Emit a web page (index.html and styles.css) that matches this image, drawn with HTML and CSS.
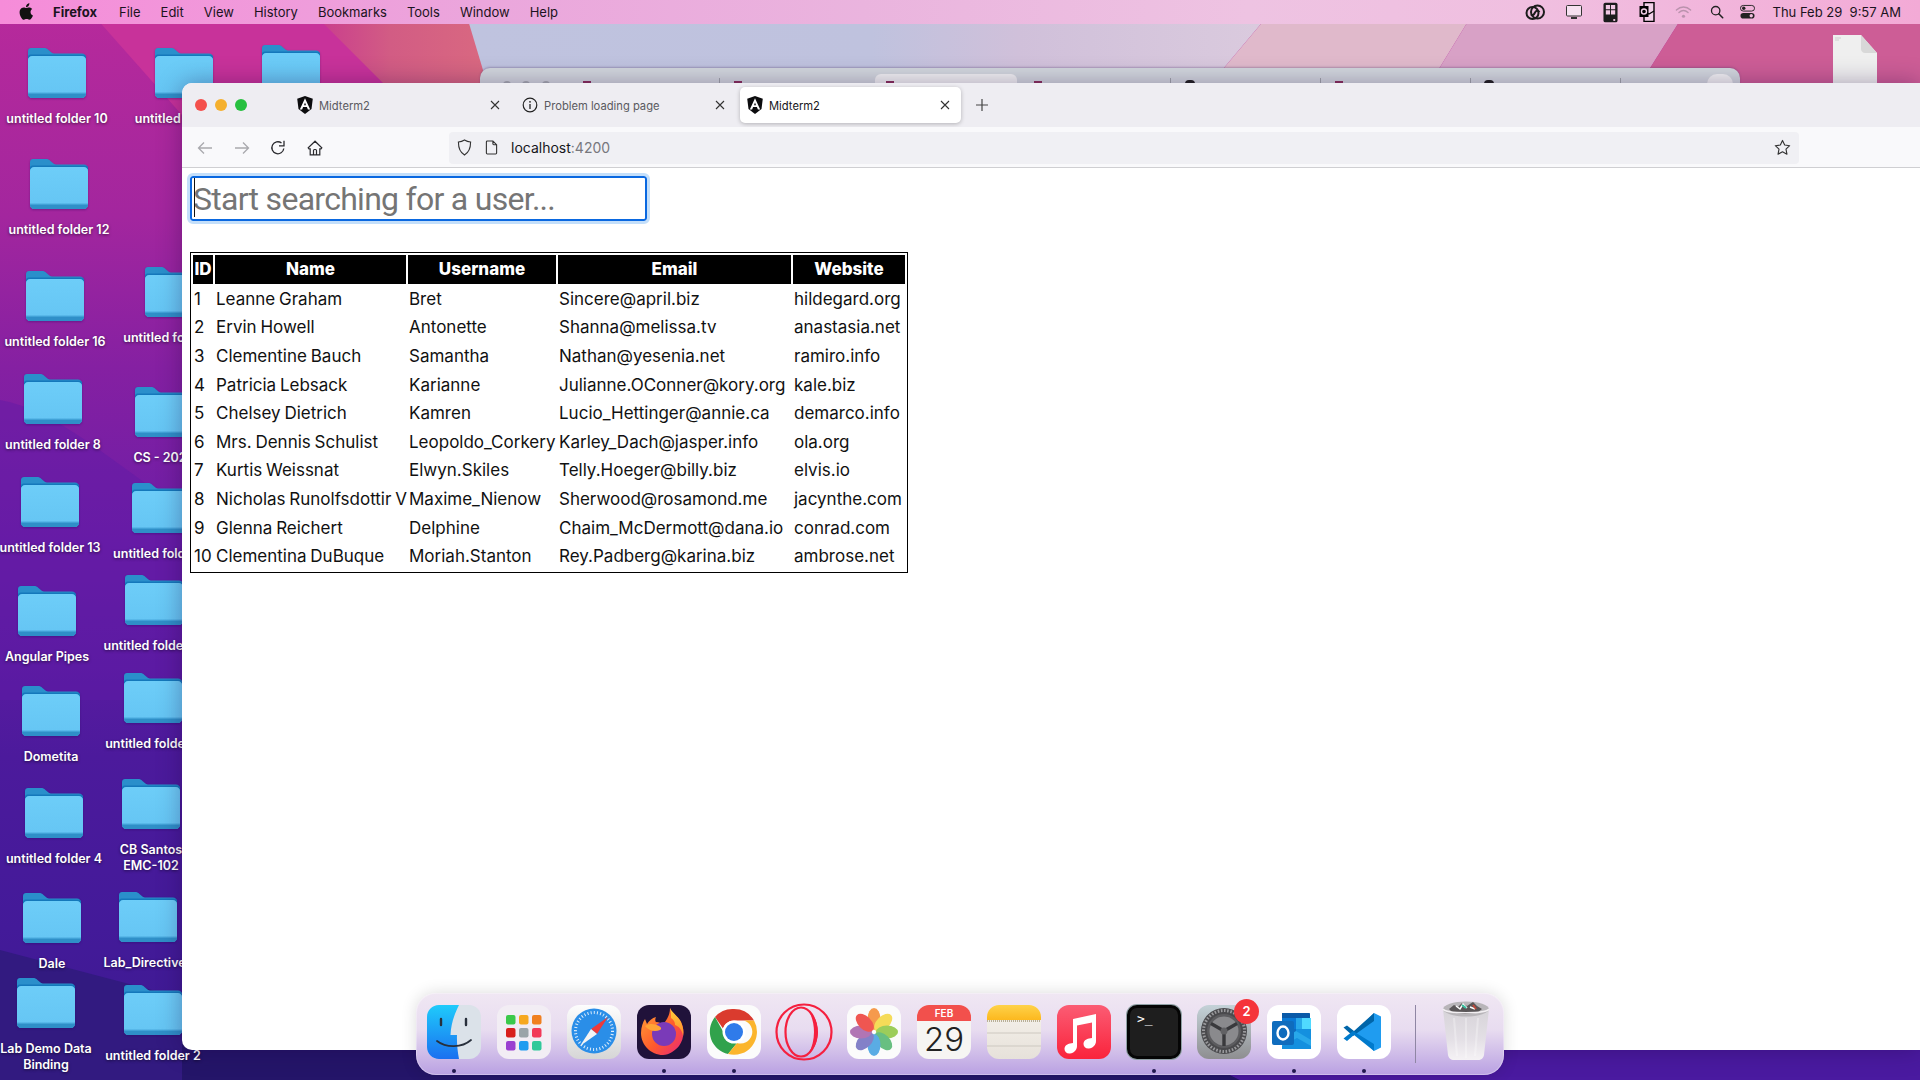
FILE: index.html
```html
<!DOCTYPE html>
<html lang="en">
<head>
<meta charset="utf-8">
<title>Midterm2</title>
<link rel="stylesheet" href="styles.css">
</head>
<body>
<svg class="defs" width="0" height="0" aria-hidden="true">
  <defs>
    <linearGradient id="fgBody" x1="0" y1="0" x2="0" y2="1"><stop offset="0" stop-color="#6dcdf8"/><stop offset=".86" stop-color="#66c6f4"/><stop offset=".87" stop-color="#56b6e8"/><stop offset="1" stop-color="#4aabe0"/></linearGradient>
    <symbol id="folder" viewBox="0 0 58 50">
      <path d="M3 0h13c2 0 3 .6 4.500 2l3 2.500c1 .8 2 1 3 1H54c2.200 0 4 1.800 4 4v6H0V3c0-1.700 1.300-3 3-3z" fill="#2a8fcb"/>
      <path d="M0 9c0-1.500 1-2.500 2.500-2.500h53C57 6.500 58 7.500 58 9v1H0z" fill="#1478bb"/>
      <path d="M0 12c0-2.200 1.800-4 4-4h50c2.200 0 4 1.800 4 4v34c0 2.200-1.800 4-4 4H4c-2.200 0-4-1.800-4-4z" fill="url(#fgBody)"/>
      <path d="M0 46c0 2.200 1.800 4 4 4h50c2.200 0 4-1.800 4-4v-.5H0z" fill="#2f8fc8"/>
    </symbol>
    <symbol id="ng" viewBox="0 0 16 18">
      <path d="M8 0 .2 2.700l1.300 10.300L8 18l6.500-5 1.300-10.300z" fill="#0c0c0e"/>
      <path d="M8 2.200 2.800 13.600h2.300l1-2.500h3.800l1 2.500h2.300zM7 9.200l1-2.600 1 2.600z" fill="#fff"/>
    </symbol>
  </defs>
</svg>

<main class="desktop">
  <svg class="wallpaper" viewBox="0 0 1920 1080" preserveAspectRatio="none" aria-hidden="true">
    <defs>
      <linearGradient id="wpBase" x1="0" y1="0" x2="0" y2="1">
        <stop offset="0" stop-color="#b82a9b"/><stop offset=".2" stop-color="#a3269e"/><stop offset=".34" stop-color="#8520a2"/><stop offset=".5" stop-color="#6c1da6"/><stop offset=".7" stop-color="#4c1a9c"/><stop offset=".86" stop-color="#431a99"/><stop offset="1" stop-color="#3c1a90"/>
      </linearGradient>
      <linearGradient id="wpLav" x1="0" y1="0" x2="1" y2="0">
        <stop offset="0" stop-color="#bfc3df"/><stop offset=".5" stop-color="#bfc2de"/><stop offset=".68" stop-color="#d0c0da"/><stop offset="1" stop-color="#dbcbde"/>
      </linearGradient>
      <linearGradient id="wpRed" x1="0" y1="0" x2="1" y2="0">
        <stop offset="0" stop-color="#c73590"/><stop offset=".45" stop-color="#d25c84"/><stop offset="1" stop-color="#da6a80"/>
      </linearGradient>
    </defs>
    <rect width="1920" height="1080" fill="url(#wpBase)"/>
    <path d="M0 400C60 410 120 470 200 520V700H0z" fill="#5f1ba6" opacity=".45"/>
    <path d="M80 0H420L500 120H200L182 115z" fill="#c8329a"/>
    <path d="M300 0H480L500 100H400z" fill="url(#wpRed)"/>
    <path d="M462 0H1281L1197 100H492z" fill="url(#wpLav)"/>
    <path d="M1281 0H1481L1420 100H1197z" fill="#e0b9cb"/>
    <path d="M1481 0H1693L1630 100H1420z" fill="#d8a1c6"/>
    <path d="M1693 0H1920V100H1630z" fill="#cd5d96"/>
    <path d="M0 950L190 1000V1080H0z" fill="#321a80"/>
    <path d="M182 1040H1160L1240 1080H182z" fill="#241569"/>
    <path d="M1160 1040H1920V1080H1240z" fill="#4a1aa0"/>
  </svg>

  <div class="menubar">
    <div class="menu-left">
      <svg class="apple" viewBox="0 0 14 17" aria-hidden="true"><path d="M11.500 9c0-2 1.600-2.900 1.700-3-1-1.400-2.400-1.600-2.900-1.600-1.200-.1-2.400.7-3 .7s-1.600-.7-2.600-.7C3.300 4.400 2 5.200 1.300 6.400c-1.500 2.500-.4 6.300 1 8.300.7 1 1.500 2.100 2.600 2.100 1 0 1.400-.7 2.700-.7s1.600.7 2.700.7 1.800-1 2.500-2c.8-1.100 1.100-2.200 1.100-2.300-.1 0-2.400-.9-2.400-3.500zM9.500 3c.6-.7 1-1.700.9-2.700-.9 0-1.900.6-2.500 1.300-.5.6-1 1.600-.9 2.600 1 .1 1.900-.5 2.500-1.200z" fill="#111"/></svg>
      <strong class="menu-app">Firefox</strong>
      <span>File</span><span>Edit</span><span>View</span><span>History</span><span>Bookmarks</span><span>Tools</span><span>Window</span><span>Help</span>
    </div>
    <div class="menu-right">
      <svg class="mi mi-cc" viewBox="0 0 20 20" aria-hidden="true"><g fill="none" stroke="#1c1c1c" stroke-width="2"><circle cx="7.500" cy="11" r="6"/><circle cx="12.500" cy="10" r="6.500"/><path d="M6 12.500c2 1.500 3 0 4-2s3-2.500 4.500-.5"/></g></svg>
      <svg class="mi mi-disp" viewBox="0 0 18 18" aria-hidden="true"><rect x="1.500" y="2.500" width="15" height="10.500" rx="1" fill="#f6e0f0" stroke="#333" stroke-width="1"/><path d="M6 14h6v2H6z" fill="#333"/></svg>
      <svg class="mi mi-grid" viewBox="0 0 16 22" aria-hidden="true"><rect x=".5" y=".5" width="15" height="21" rx="2" fill="#1c1c1c"/><path d="M3 3h4.500v4.500H3zM8.500 3H13v4.500H8.500zM3 8.500h4.500V13H3zM8.500 8.500H13V13H8.500z" fill="#f2c8e4"/><rect x="11" y="18" width="2" height="2" fill="#f2c8e4"/></svg>
      <svg class="mi mi-ol" viewBox="0 0 16 20" aria-hidden="true"><path d="M5 .5h10v19H5z" fill="#f3d0e8" stroke="#000" stroke-width="1.400"/><path d="M5 9l5 3 5-3" fill="none" stroke="#000" stroke-width="1.200"/><rect x=".5" y="4" width="9" height="11" fill="#000"/><circle cx="5" cy="9.500" r="2.500" fill="none" stroke="#f3d0e8" stroke-width="1.400"/></svg>
      <svg class="mi mi-wifi" viewBox="0 0 18 14" aria-hidden="true"><g fill="none" stroke="#ba92ad" stroke-width="1.500" stroke-linecap="round"><path d="M1.500 4.800C6 .7 12 .7 16.500 4.800"/><path d="M4.200 7.600c3-2.600 6.600-2.600 9.600 0"/></g><circle cx="9" cy="11.500" r="1.700" fill="#ba92ad"/></svg>
      <svg class="mi mi-search" viewBox="0 0 16 16" aria-hidden="true"><circle cx="6.500" cy="6.500" r="4.800" fill="none" stroke="#222" stroke-width="1.500"/><path d="M10 10l4.500 4.500" stroke="#222" stroke-width="1.800" stroke-linecap="round"/></svg>
      <svg class="mi mi-ctl" viewBox="0 0 16 16" aria-hidden="true"><rect x=".5" y="1" width="15" height="6" rx="3" fill="none" stroke="#222"/><circle cx="4" cy="4" r="1.800" fill="#222"/><rect x=".5" y="9" width="15" height="6" rx="3" fill="#222"/><circle cx="12" cy="12" r="1.800" fill="#f3c0e0"/></svg>
      <span class="clock">Thu Feb 29&nbsp;&nbsp;9:57 AM</span>
    </div>
  </div>

  <div class="icon i1"><svg class="folder"><use href="#folder"/></svg><span>untitled folder 10</span></div>
  <div class="icon i2"><svg class="folder"><use href="#folder"/></svg><span>untitled folder 11</span></div>
  <div class="icon i3"><svg class="folder"><use href="#folder"/></svg></div>
  <div class="icon i4"><svg class="folder"><use href="#folder"/></svg><span>untitled folder 12</span></div>
  <div class="icon i5"><svg class="folder"><use href="#folder"/></svg><span>untitled folder 16</span></div>
  <div class="icon i6"><svg class="folder"><use href="#folder"/></svg><span>untitled folder 14</span></div>
  <div class="icon i7"><svg class="folder"><use href="#folder"/></svg><span>untitled folder 8</span></div>
  <div class="icon i8"><svg class="folder"><use href="#folder"/></svg><span>CS - 2023</span></div>
  <div class="icon i9"><svg class="folder"><use href="#folder"/></svg><span>untitled folder 13</span></div>
  <div class="icon i10"><svg class="folder"><use href="#folder"/></svg><span>untitled folder 9</span></div>
  <div class="icon i11"><svg class="folder"><use href="#folder"/></svg><span>Angular Pipes</span></div>
  <div class="icon i12"><svg class="folder"><use href="#folder"/></svg><span>untitled folder 15</span></div>
  <div class="icon i13"><svg class="folder"><use href="#folder"/></svg><span>Dometita</span></div>
  <div class="icon i14"><svg class="folder"><use href="#folder"/></svg><span>untitled folder 5</span></div>
  <div class="icon i15"><svg class="folder"><use href="#folder"/></svg><span>untitled folder 4</span></div>
  <div class="icon i16"><svg class="folder"><use href="#folder"/></svg><span>CB Santos<br>EMC-102</span></div>
  <div class="icon i17"><svg class="folder"><use href="#folder"/></svg><span>Dale</span></div>
  <div class="icon i18"><svg class="folder"><use href="#folder"/></svg><span>Lab_Directives</span></div>
  <div class="icon i19"><svg class="folder"><use href="#folder"/></svg><span>Lab Demo Data<br>Binding</span></div>
  <div class="icon i20"><svg class="folder"><use href="#folder"/></svg><span>untitled folder 2</span></div>

  <div class="doc-file">
    <svg viewBox="0 0 44 48" aria-hidden="true"><path d="M0 0h28l16 18v30H0z" fill="#efefef"/><path d="M28 0v14c0 2.200 1.800 4 4 4h12z" fill="#d8d8d8"/><path d="M2 3h6M2 5h4" stroke="#bbb" stroke-width=".6"/></svg>
  </div>

  <div class="back-window">
    <span class="back-tab"></span>
    <span class="back-end"></span>
    <i class="tl t1"></i><i class="tl t2"></i><i class="tl t3"></i>
    <i class="mark m1"></i><i class="mark m2"></i><i class="mark m3"></i><i class="mark m4"></i><i class="mark m5"></i><i class="mark dark m6"></i><i class="mark dark m7"></i>
    <i class="sep s1"></i><i class="sep s2"></i><i class="sep s3"></i><i class="sep s4"></i><i class="sep s5"></i>
  </div>

  <section class="browser">
    <div class="tabstrip">
      <div class="lights"><i class="light red"></i><i class="light amber"></i><i class="light green"></i></div>
      <div class="tab">
        <svg class="fav"><use href="#ng"/></svg><span class="tab-title">Midterm2</span>
        <svg class="tab-x" viewBox="0 0 12 12" aria-hidden="true"><path d="M2 2l8 8M10 2l-8 8" stroke="#333" stroke-width="1.100"/></svg>
      </div>
      <div class="tab">
        <svg class="fav" viewBox="0 0 16 18" aria-hidden="true"><circle cx="8" cy="9" r="6.800" fill="none" stroke="#222" stroke-width="1.200"/><path d="M8 8v5" stroke="#222" stroke-width="1.300"/><circle cx="8" cy="5.800" r=".9" fill="#222"/></svg><span class="tab-title">Problem loading page</span>
        <svg class="tab-x" viewBox="0 0 12 12" aria-hidden="true"><path d="M2 2l8 8M10 2l-8 8" stroke="#333" stroke-width="1.100"/></svg>
      </div>
      <div class="tab active">
        <svg class="fav"><use href="#ng"/></svg><span class="tab-title">Midterm2</span>
        <svg class="tab-x" viewBox="0 0 12 12" aria-hidden="true"><path d="M2 2l8 8M10 2l-8 8" stroke="#333" stroke-width="1.100"/></svg>
      </div>
      <svg class="new-tab" viewBox="0 0 14 14" aria-hidden="true"><path d="M7 1v12M1 7h12" stroke="#444" stroke-width="1.200"/></svg>
    </div>

    <div class="toolbar">
      <svg class="tb dim" viewBox="0 0 16 16" aria-hidden="true"><path d="M15 8H1.500M7 2.500 1.500 8 7 13.500" fill="none" stroke="#a9a9ad" stroke-width="1.300"/></svg>
      <svg class="tb dim" viewBox="0 0 16 16" aria-hidden="true"><path d="M1 8h13.500M9 2.500 14.500 8 9 13.500" fill="none" stroke="#a9a9ad" stroke-width="1.300"/></svg>
      <svg class="tb" viewBox="0 0 16 16" aria-hidden="true"><path d="M13.800 8.500A6 6 0 1 1 11.500 3" fill="none" stroke="#2b2b2f" stroke-width="1.300"/><path d="M14 .8v5h-5" fill="none" stroke="#2b2b2f" stroke-width="1.300"/></svg>
      <svg class="tb" viewBox="0 0 16 16" aria-hidden="true"><path d="M8 1.200 1.200 7.800 2 8.800h1.200v6h9.600v-6H14l.8-1zM6.500 14.800v-4.300c0-.6.400-1 1-1h1c.6 0 1 .4 1 1v4.300" fill="none" stroke="#2b2b2f" stroke-width="1.200"/></svg>
      <div class="urlbar">
        <svg class="shield" viewBox="0 0 16 18" aria-hidden="true"><path d="M8 1c2 1.300 4 2 6.500 2.200 0 6-1.200 10.800-6.500 13.800C2.700 14 1.500 9.200 1.500 3.200 4 3 6 2.300 8 1z" fill="none" stroke="#333" stroke-width="1.200"/></svg>
        <svg class="page" viewBox="0 0 14 16" aria-hidden="true"><path d="M2.500 1h6L12.500 5v9c0 .6-.4 1-1 1h-9c-.6 0-1-.4-1-1V2c0-.6.400-1 1-1zM8.500 1v3c0 .6.400 1 1 1h3" fill="none" stroke="#333" stroke-width="1.200"/></svg>
        <span class="url"><span class="host">localhost</span>:4200</span>
        <svg class="star" viewBox="0 0 18 18" aria-hidden="true"><path d="M9 1.500l2.300 4.900 5.300.7-3.900 3.700 1 5.300L9 13.500l-4.700 2.600 1-5.300L1.400 7.100l5.300-.7z" fill="none" stroke="#333" stroke-width="1.200" stroke-linejoin="round"/></svg>
      </div>
    </div>

    <div class="content">
      <div class="search-wrap">
        <i class="caret"></i>
        <input class="search" type="text" placeholder="Start searching for a user...">
      </div>
      <table class="users">
        <colgroup><col class="c-id"><col class="c-name"><col class="c-user"><col class="c-mail"><col class="c-web"></colgroup>
        <thead><tr><th>ID</th><th>Name</th><th>Username</th><th>Email</th><th>Website</th></tr></thead>
        <tbody>
          <tr><td>1</td><td>Leanne Graham</td><td>Bret</td><td>Sincere@april.biz</td><td>hildegard.org</td></tr>
          <tr><td>2</td><td>Ervin Howell</td><td>Antonette</td><td>Shanna@melissa.tv</td><td>anastasia.net</td></tr>
          <tr><td>3</td><td>Clementine Bauch</td><td>Samantha</td><td>Nathan@yesenia.net</td><td>ramiro.info</td></tr>
          <tr><td>4</td><td>Patricia Lebsack</td><td>Karianne</td><td>Julianne.OConner@kory.org</td><td>kale.biz</td></tr>
          <tr><td>5</td><td>Chelsey Dietrich</td><td>Kamren</td><td>Lucio_Hettinger@annie.ca</td><td>demarco.info</td></tr>
          <tr><td>6</td><td>Mrs. Dennis Schulist</td><td>Leopoldo_Corkery</td><td>Karley_Dach@jasper.info</td><td>ola.org</td></tr>
          <tr><td>7</td><td>Kurtis Weissnat</td><td>Elwyn.Skiles</td><td>Telly.Hoeger@billy.biz</td><td>elvis.io</td></tr>
          <tr><td>8</td><td>Nicholas Runolfsdottir V</td><td>Maxime_Nienow</td><td>Sherwood@rosamond.me</td><td>jacynthe.com</td></tr>
          <tr><td>9</td><td>Glenna Reichert</td><td>Delphine</td><td>Chaim_McDermott@dana.io</td><td>conrad.com</td></tr>
          <tr><td>10</td><td>Clementina DuBuque</td><td>Moriah.Stanton</td><td>Rey.Padberg@karina.biz</td><td>ambrose.net</td></tr>
        </tbody>
      </table>
    </div>
  </section>

  <nav class="dock">
    <div class="app">
      <svg viewBox="0 0 54 54" aria-hidden="true"><defs><linearGradient id="fL" x1="0" y1="0" x2="0" y2="1"><stop offset="0" stop-color="#1fcbfb"/><stop offset="1" stop-color="#1a70f0"/></linearGradient></defs><rect width="54" height="54" rx="12" fill="#dbe2e9"/><path d="M12 0h20c-4 8-8 18-8.500 30H30c-.3 8 .5 16 2 24H12C5.400 54 0 48.600 0 42V12C0 5.400 5.400 0 12 0z" fill="url(#fL)"/><path d="M14 14v6M39 14v6" stroke="#28303c" stroke-width="2.400" stroke-linecap="round"/><path d="M10 36c9 7 25 7 34-1" fill="none" stroke="#28303c" stroke-width="1.800" stroke-linecap="round"/></svg>
      <i class="dot"></i>
    </div>
    <div class="app">
      <svg viewBox="0 0 54 54" aria-hidden="true"><rect width="54" height="54" rx="12" fill="#f2edf4"/><rect x="9" y="10" width="9.500" height="9.500" rx="2" fill="#3bc94a"/><rect x="22" y="10" width="9.500" height="9.500" rx="2" fill="#f6a81f"/><rect x="35" y="10" width="9.500" height="9.500" rx="2" fill="#f0801f"/><rect x="9" y="23" width="9.500" height="9.500" rx="2" fill="#d81f1c"/><rect x="22" y="23" width="9.500" height="9.500" rx="2" fill="#9aa4a8"/><rect x="35" y="23" width="9.500" height="9.500" rx="2" fill="#f23a58"/><rect x="9" y="36" width="9.500" height="9.500" rx="2" fill="#9a3fd0"/><rect x="22" y="36" width="9.500" height="9.500" rx="2" fill="#1f9cf0"/><rect x="35" y="36" width="9.500" height="9.500" rx="2" fill="#2fc99a"/></svg>
    </div>
    <div class="app">
      <svg viewBox="0 0 54 54" aria-hidden="true"><defs><linearGradient id="sf" x1="0" y1="0" x2="0" y2="1"><stop offset="0" stop-color="#fdfdfd"/><stop offset="1" stop-color="#d6d6d6"/></linearGradient></defs><rect width="54" height="54" rx="12" fill="url(#sf)"/><circle cx="27" cy="26" r="22.500" fill="#2a8ee8"/><circle cx="27" cy="26" r="18.500" fill="none" stroke="#fff" stroke-width="3" stroke-dasharray="1 2.200" opacity=".85"/><path d="M41 12 24 24 30 29z" fill="#ee3a3a"/><path d="M13 41 24 24 30 29z" fill="#f4f4f4"/></svg>
    </div>
    <div class="app">
      <svg viewBox="0 0 54 54" aria-hidden="true"><defs><linearGradient id="ffo" x1="0" y1="0" x2="1" y2="1"><stop offset="0" stop-color="#ffa436"/><stop offset=".55" stop-color="#ff5a2c"/><stop offset="1" stop-color="#e8257f"/></linearGradient><linearGradient id="ffy" x1="0" y1="0" x2="0" y2="1"><stop offset="0" stop-color="#ffd23c"/><stop offset="1" stop-color="#ff8a2a"/></linearGradient></defs><rect width="54" height="54" rx="12" fill="#20123a"/><path d="M33 3c2 5 8 8 11 14 4 8 3 17-2 24-3 4-10 9-16 9C14 50 4 40 4 28c0-6 2-11 4-14l2 5c2-3 5-6 9-7-1 2-1 4 0 5 3 0 5 1 7 3 3-5 7-9 7-17z" fill="url(#ffo)"/><path d="M33 3c2 5 8 8 11 14 2 5 3 9 2 14-1-7-5-10-8-11 0-3-1-5-4-7 0-4 0-7-1-10z" fill="url(#ffy)"/><circle cx="27" cy="29" r="12" fill="#7a3ab8"/><path d="M8 21c5-3 10-2 14 0 2 1 3 3 1 4-5 2-11 1-15-4z" fill="#ffa436"/></svg>
      <i class="dot"></i>
    </div>
    <div class="app">
      <svg viewBox="0 0 54 54" aria-hidden="true"><rect width="54" height="54" rx="12" fill="#fbfbfb"/><path d="M27 4a23 23 0 0 1 20 11.500H27a11.500 11.500 0 0 0-11 8L8 12A23 23 0 0 1 27 4z" fill="#da3b2e"/><path d="M8 12l10 18a11.500 11.500 0 0 0 12 8L21 49A23 23 0 0 1 8 12z" fill="#31a24c"/><path d="M47 15.500A23 23 0 0 1 21 49l9-11a11.500 11.500 0 0 0 7-22.500z" fill="#fbb52c"/><circle cx="27" cy="27" r="11.500" fill="#fff"/><circle cx="27" cy="27" r="9" fill="#2f7bea"/></svg>
      <i class="dot"></i>
    </div>
    <div class="app">
      <svg class="opera" viewBox="0 0 58 58" aria-hidden="true"><circle cx="29" cy="29" r="27.500" fill="none" stroke="#f5203f" stroke-width="2.200"/><ellipse cx="26" cy="29" rx="15.500" ry="24.500" fill="none" stroke="#f5203f" stroke-width="2.200"/><path d="M34 8c6 5 9 13 9 21s-3 16-9 21c3-6 5-13 5-21s-2-15-5-21z" fill="#f5203f"/></svg>
    </div>
    <div class="app">
      <svg viewBox="0 0 54 54" aria-hidden="true"><rect width="54" height="54" rx="12" fill="#fbfbfb"/><g opacity=".85"><ellipse cx="27" cy="14" rx="6.500" ry="11" fill="#f58a2e"/><ellipse cx="36.200" cy="17.800" rx="6.500" ry="11" transform="rotate(45 36.200 17.800)" fill="#f4d63c"/><ellipse cx="40" cy="27" rx="11" ry="6.500" fill="#8cc63f"/><ellipse cx="36.200" cy="36.200" rx="6.500" ry="11" transform="rotate(-45 36.200 36.200)" fill="#4fb56c"/><ellipse cx="27" cy="40" rx="6.500" ry="11" fill="#3f9fe0"/><ellipse cx="17.800" cy="36.200" rx="6.500" ry="11" transform="rotate(45 17.800 36.200)" fill="#6f6cc0"/><ellipse cx="14" cy="27" rx="11" ry="6.500" fill="#a55ea8"/><ellipse cx="17.800" cy="17.800" rx="6.500" ry="11" transform="rotate(-45 17.800 17.800)" fill="#ee3a34"/></g><circle cx="27" cy="27" r="1.200" fill="#fff"/></svg>
    </div>
    <div class="app calendar">
      <span class="cal-month">FEB</span><span class="cal-day">29</span>
    </div>
    <div class="app">
      <svg viewBox="0 0 54 54" aria-hidden="true"><defs><linearGradient id="nt" x1="0" y1="0" x2="0" y2="1"><stop offset="0" stop-color="#f7f3ec"/><stop offset="1" stop-color="#e6e1da"/></linearGradient><linearGradient id="ny" x1="0" y1="0" x2="0" y2="1"><stop offset="0" stop-color="#fed24a"/><stop offset="1" stop-color="#fcb81e"/></linearGradient></defs><rect width="54" height="54" rx="12" fill="url(#nt)"/><path d="M12 0h30c6.600 0 12 5.400 12 12v3H0v-3C0 5.400 5.400 0 12 0z" fill="url(#ny)"/><path d="M0 16h54" stroke="#a59a7c" stroke-width="1.500" stroke-dasharray="1 1"/><path d="M0 28h54M0 41h54" stroke="#cdc8c0" stroke-width="1"/></svg>
    </div>
    <div class="app">
      <svg viewBox="0 0 54 54" aria-hidden="true"><defs><linearGradient id="mu" x1="0" y1="0" x2="0" y2="1"><stop offset="0" stop-color="#fb5c74"/><stop offset="1" stop-color="#fa233b"/></linearGradient></defs><rect width="54" height="54" rx="12" fill="url(#mu)"/><path d="M39 9v27c0 4-3 7-7 7.500-3 .4-5.500-1.500-5.500-4.500s2.500-5 5.500-5.500l3-.6V17.500l-15 3V41c0 4-3 7-7 7.500-3 .4-5.500-1.500-5.500-4.500s2.500-5 5.500-5.500l3-.6V14z" fill="#fff"/></svg>
    </div>
    <div class="app">
      <div class="terminal"><span>&gt;_</span></div>
      <i class="dot"></i>
    </div>
    <div class="app">
      <svg viewBox="0 0 54 54" aria-hidden="true"><defs><linearGradient id="st" x1="0" y1="0" x2="0" y2="1"><stop offset="0" stop-color="#c4d2d8"/><stop offset="1" stop-color="#8e8e90"/></linearGradient></defs><rect width="54" height="54" rx="12" fill="url(#st)"/><circle cx="27" cy="26" r="23" fill="#4a4a4d"/><circle cx="27" cy="26" r="20.500" fill="none" stroke="#9a9a9d" stroke-width="3" stroke-dasharray="1.600 1.600"/><circle cx="27" cy="26" r="17" fill="#5c5c5f"/><circle cx="27" cy="26" r="14.500" fill="#8a8a8d"/><path d="M27 26V41M27 26 14 18.500M27 26l13-7.500" stroke="#39393c" stroke-width="3.400"/><circle cx="27" cy="26" r="3.500" fill="#616164"/></svg>
      <b class="badge">2</b>
    </div>
    <div class="app">
      <svg viewBox="0 0 54 54" aria-hidden="true"><rect width="54" height="54" rx="12" fill="#fff"/><path d="M15 8h27c.6 0 1 .4 1 1v4H15z" fill="#0a5aa8"/><path d="M15 13h14v11H15z" fill="#0a78d4"/><path d="M29 13h14v11H29z" fill="#28a8ea"/><path d="M35 13h9v11h-9z" fill="#50d9ff"/><path d="M15 24h14v11H15z" fill="#0f6cbd"/><path d="M29 24h15v11H29z" fill="#1490df"/><path d="M15 35l14-9 15 9v8H15z" fill="#28a8ea"/><path d="M15 44h29v-3L30 33 15 41z" fill="#1490df"/><rect x="5" y="16" width="22" height="24" rx="2" fill="#0f6cbd"/><ellipse cx="16" cy="28" rx="5.500" ry="6.500" fill="none" stroke="#fff" stroke-width="2.400"/></svg>
      <i class="dot"></i>
    </div>
    <div class="app">
      <svg viewBox="0 0 54 54" aria-hidden="true"><rect width="54" height="54" rx="12" fill="#fff"/><path d="M37 8 44 11.500V42.500L37 46 18 28z" fill="#1f9cf0"/><path d="M37 8 17 26l-7-5.500-3.500 2L16 31 37 16z" fill="#0065a9"/><path d="M37 46 17 30l-7 6-3.500-2.500L16 26l21 13z" fill="#007acc"/></svg>
      <i class="dot"></i>
    </div>
    <i class="dock-sep"></i>
    <div class="app trash">
      <svg viewBox="0 0 48 61" aria-hidden="true"><defs><linearGradient id="tr" x1="0" y1="0" x2="0" y2="1"><stop offset="0" stop-color="#d6d3d8"/><stop offset=".6" stop-color="#e4e0e6"/><stop offset="1" stop-color="#f5f2f5"/></linearGradient></defs><path d="M1 9h46l-5 46c-.4 3-3 5-6 5H12c-3 0-5.600-2-6-5z" fill="url(#tr)"/><path d="M12 18l3 38M24 18v40M36 18l-3 38" stroke="#fff" stroke-width="2" opacity=".3"/><ellipse cx="24" cy="9" rx="23" ry="7.500" fill="#b8b5b9"/><path d="M7 9l5-4 4 2 4-4 5 3 6-4 4 4 5 3-5 4-12 1-12-1z" fill="#5a5658"/><path d="M14 6l4 3 3-5 4 4M28 7l5 2" fill="none" stroke="#fff" stroke-width="1.500"/><path d="M20 5l4 3" stroke="#35c0a0" stroke-width="2"/><path d="M31 5l3 4" stroke="#c0483a" stroke-width="2"/><path d="M1 9c3 5 43 5 46 0" fill="none" stroke="#f2eff2" stroke-width="1.600"/></svg>
    </div>
  </nav>
</main>
</body>
</html>
```
FILE: styles.css
```css
* { box-sizing: border-box; }
html, body { margin: 0; padding: 0; height: 100%; overflow: hidden; }
body { font-family: "Inter", "Liberation Sans", sans-serif; }
.defs { position: absolute; }

.desktop { position: relative; width: 1920px; height: 1080px; overflow: hidden; background: #4c1a9c; }
.wallpaper { position: absolute; inset: 0; width: 100%; height: 100%; display: block; }

/* menu bar */
.menubar {
  position: absolute; left: 0; top: 0; width: 100%; height: 24px; z-index: 5;
  display: flex; justify-content: space-between; align-items: center;
  background: linear-gradient(90deg, #f68cd9 0%, #eba6dc 25%, #eab4de 45%, #eec3e2 65%, #f0bfe0 80%, #f3aad6 100%);
  font-size: 13px; color: #1b1320;
}
.menu-left { display: flex; align-items: center; padding-left: 19px; }
.menu-left span { margin-left: 20px; }
.apple { width: 14px; height: 17px; margin-right: 20px; margin-top: -2px; }
.menu-app { font-weight: 700; }
.menu-app + span { margin-left: 22px; }
.menu-right { display: flex; align-items: center; padding-right: 19px; }
.mi { display: block; flex: none; }
.mi-cc { width: 20px; height: 20px; margin-right: 20px; }
.mi-disp { width: 18px; height: 18px; margin-right: 20px; }
.mi-grid { width: 15px; height: 21px; margin-right: 21px; }
.mi-ol { width: 16px; height: 20px; margin-right: 20px; }
.mi-wifi { width: 17px; height: 14px; margin-right: 18px; }
.mi-search { width: 14px; height: 14px; margin-right: 16px; }
.mi-ctl { width: 15px; height: 16px; margin-right: 17px; }
.clock { white-space: nowrap; }

/* desktop icons */
.icon {
  position: absolute; width: 108px; display: flex; flex-direction: column; align-items: center;
  color: #fff; font-size: 12.500px; font-weight: 600; line-height: 16px; text-align: center;
  text-shadow: 0 1px 3px rgba(0,0,0,.55);
}
.folder { width: 58px; height: 50px; display: block; flex: none; margin-bottom: 13px; filter: drop-shadow(0 1px 1px rgba(40,0,90,.35)); }
.icon span { white-space: nowrap; }
.i1 { left: 3px; top: 48px; }
.i2 { left: 130px; top: 48px; }
.i3 { left: 237px; top: 45px; }
.i4 { left: 5px; top: 159px; }
.i5 { left: 1px; top: 271px; }
.i6 { left: 120px; top: 267px; }
.i7 { left: -1px; top: 374px; }
.i8 { left: 110px; top: 387px; }
.i9 { left: -4px; top: 477px; }
.i10 { left: 107px; top: 483px; }
.i11 { left: -7px; top: 586px; }
.i12 { left: 100px; top: 575px; }
.i13 { left: -3px; top: 686px; }
.i14 { left: 99px; top: 673px; }
.i15 { left: 0; top: 788px; }
.i16 { left: 97px; top: 779px; }
.i17 { left: -2px; top: 893px; }
.i18 { left: 94px; top: 892px; }
.i19 { left: -8px; top: 978px; }
.i20 { left: 99px; top: 985px; }

.doc-file { position: absolute; left: 1833px; top: 35px; width: 44px; height: 48px; }
.doc-file svg { display: block; width: 100%; height: 100%; }

/* window behind the browser */
.back-window {
  position: absolute; left: 480px; top: 68px; width: 1260px; height: 40px;
  background: #d2d7dd; border-radius: 10px 10px 0 0;
  box-shadow: 0 -1px 2px rgba(90,60,110,.35);
}
.back-tab { position: absolute; left: 395px; top: 6px; width: 142px; height: 30px; background: #f1f1f2; border-radius: 6px 6px 0 0; }
.back-end { position: absolute; left: 1227px; top: 6px; width: 26px; height: 30px; background: #f1f1f2; border-radius: 10px 10px 0 0; }
.mark { position: absolute; top: 13px; width: 8px; height: 3px; background: #8a2f5c; }
.mark.dark { background: #222; width: 10px; top: 12px; height: 4px; border-radius: 5px 5px 0 0; }
.m1 { left: 103px; }
.m2 { left: 254px; }
.m3 { left: 406px; }
.m4 { left: 554px; }
.m5 { left: 855px; }
.m6 { left: 705px; }
.m7 { left: 1004px; }
.tl { position: absolute; top: 13px; width: 8px; height: 4px; border-radius: 4px 4px 0 0; background: #a8acb2; }
.t1 { left: 23px; }
.t2 { left: 42px; }
.t3 { left: 62px; }
.sep { position: absolute; top: 10px; width: 1px; height: 8px; background: #a0a4aa; }
.s1 { left: 239px; }
.s2 { left: 690px; }
.s3 { left: 840px; }
.s4 { left: 990px; }
.s5 { left: 1140px; }

/* browser */
.browser {
  position: absolute; left: 182px; top: 83px; width: 1738px; height: 967px; z-index: 2;
  display: flex; flex-direction: column; background: #fff; overflow: hidden;
  border-radius: 10px 0 0 10px;
  box-shadow: 0 0 24px rgba(30,0,60,.35);
}
.tabstrip { height: 44px; flex: none; display: flex; align-items: center; background: #eeedf2; }
.lights { width: 108px; flex: none; display: flex; gap: 8px; padding-left: 13px; }
.light { width: 12px; height: 12px; border-radius: 50%; display: block; }
.red { background: #f4504c; }
.amber { background: #f5b02e; }
.green { background: #27c040; }
.tab {
  width: 221px; height: 36px; flex: none; margin-right: 4px; padding: 0 10px 0 7px;
  display: flex; align-items: center; gap: 6px; border-radius: 5px;
  color: #5a5a60; font-size: 11.200px;
}
.tab.active { background: #fff; color: #16161a; box-shadow: 0 1px 4px rgba(0,0,0,.25); }
.fav { width: 16px; height: 18px; flex: none; display: block; }
.tab-title { flex: 1; white-space: nowrap; overflow: hidden; padding-top: 2px; }
.tab-x { width: 12px; height: 12px; flex: none; }
.new-tab { width: 14px; height: 14px; margin-left: 10px; }

.toolbar { height: 41px; flex: none; display: flex; align-items: center; padding: 1px 121px 0 15px; background: #f9f9fb; border-bottom: 1px solid #cfcfd2; gap: 20.500px; }
.tb { width: 16px; height: 16px; flex: none; display: block; }
.urlbar {
  flex: 1; height: 32px; margin-left: 106px; display: flex; align-items: center;
  background: #f0f0f4; border-radius: 4px; padding: 0 8px; color: #77777d; font-size: 14px;
}
.shield { width: 15px; height: 17px; margin-right: 13px; }
.page { width: 13px; height: 15px; margin-right: 13px; }
.host { color: #16161a; }
.url { flex: 1; }
.star { width: 17px; height: 17px; }

.content { flex: 1; padding: 8px; }
.search-wrap { position: relative; width: 457px; height: 45px; }
.caret { position: absolute; left: 4px; top: 2px; width: 1px; height: 39px; background: #111; }
.search {
  width: 100%; height: 100%; display: block; border: 2px solid #0a68e0; border-radius: 3px; outline: 3px solid #c4dffa;
  padding: 0 1px; font-family: "Roboto", sans-serif; font-size: 32px; letter-spacing: -.72px; background: #fff;
}
.search::placeholder { color: #757575; opacity: 1; }

.users {
  margin-top: 31px; width: 718px; table-layout: fixed; border-collapse: separate; border-spacing: 2px;
  border: 1px solid #000; outline: 1px solid #000; outline-offset: -1px;
  font-family: "Inter", sans-serif; font-size: 17px; word-spacing: -1px; color: #111;
}
.c-id { width: 20px; }
.c-name { width: 191px; }
.c-user { width: 148px; }
.c-mail { width: 233px; }
.c-web { width: 112px; }
.users th { height: 29px; padding: 0 0 1px; background: #000; color: #fff; font-weight: 800; font-size: 17px; text-align: center; }
.users td { height: 26.600px; padding: 0 0 1px 1px; white-space: nowrap; overflow: visible; text-align: left; }

/* dock */
.dock {
  position: absolute; left: 416px; top: 993px; width: 1088px; height: 82px; z-index: 3;
  display: flex; align-items: flex-start; gap: 16px; padding: 12px 0 0 11px;
  border-radius: 20px;
  background: linear-gradient(180deg, #f0e7f3 0%, #e8dcf0 45%, #b9a0e2 100%);
  box-shadow: 0 0 16px rgba(0,0,0,.14), inset 0 0 0 1px rgba(255,255,255,.3);
}
.app { position: relative; width: 54px; height: 54px; flex: none; }
.app > svg { display: block; width: 54px; height: 54px; }
.app > svg.opera { width: 58px; height: 58px; margin: -2px; }
.dot { position: absolute; left: 25px; top: 64px; width: 4px; height: 4px; border-radius: 50%; background: #22184e; }
.calendar { border-radius: 12px; overflow: hidden; background: #f6f5f3; display: flex; flex-direction: column; align-items: center; }
.cal-month { width: 100%; height: 16px; background: #f2504c; color: #fff; font-size: 10px; font-weight: 600; line-height: 16px; text-align: center; }
.cal-day { font-size: 33px; font-weight: 300; line-height: 37px; color: #222; }
.terminal { width: 54px; height: 54px; background: #1e1e1e; border: 3px solid #050505; border-radius: 10px; box-shadow: 0 0 0 1px #8fa0a4; color: #fff; font-family: "DejaVu Sans Mono", monospace; font-size: 13px; line-height: 16px; padding: 3px 0 0 7px; }
.badge { position: absolute; left: 37px; top: -6px; width: 25px; height: 25px; border-radius: 50%; background: #f5343a; color: #fff; font-size: 13px; font-weight: 600; line-height: 25px; text-align: center; }
.dock-sep { width: 1px; height: 58px; margin-left: 8px; flex: none; background: #8f86a4; }
.trash { width: 48px; height: 61px; margin-top: -5px; margin-left: 10px; }
.app.trash > svg { width: 48px; height: 61px; }
```
